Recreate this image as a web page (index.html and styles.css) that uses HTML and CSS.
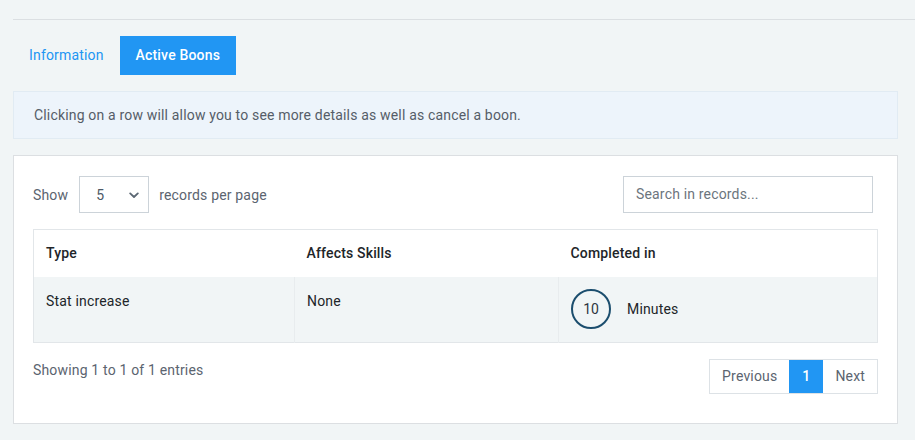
FILE: index.html
```html
<!DOCTYPE html>
<html lang="en">
<head>
<meta charset="utf-8">
<title>Active Boons</title>
<link rel="stylesheet" href="styles.css">
</head>
<body>
<div class="page">
  <div class="rule"></div>
  <nav class="tabs">
    <a class="tab">Information</a>
    <a class="tab active">Active Boons</a>
  </nav>
  <div class="alert">Clicking on a row will allow you to see more details as well as cancel a boon.</div>
  <section class="card">
    <div class="controls">
      <div class="length">
        <span>Show</span>
        <div class="select">
          <span class="select-value">5</span>
          <svg class="chev" width="10" height="7" viewBox="0 0 10 7"><path d="M1.2 1.4 L5 5 L8.8 1.4" fill="none" stroke="#5b6773" stroke-width="1.8" stroke-linecap="round" stroke-linejoin="round"/></svg>
        </div>
        <span>records per page</span>
      </div>
      <div class="search">Search in records...</div>
    </div>
    <table class="grid">
      <thead>
        <tr>
          <th class="c1">Type</th>
          <th class="c2">Affects Skills</th>
          <th class="c3">Completed in</th>
        </tr>
      </thead>
      <tbody>
        <tr>
          <td>Stat increase</td>
          <td>None</td>
          <td class="cell-timer">
            <div class="timer"><span class="ring">10</span><span>Minutes</span></div>
          </td>
        </tr>
      </tbody>
    </table>
    <div class="footer">
      <div class="info">Showing 1 to 1 of 1 entries</div>
      <div class="pager">
        <span class="pg">Previous</span>
        <span class="pg current">1</span>
        <span class="pg">Next</span>
      </div>
    </div>
  </section>
</div>
</body>
</html>
```
FILE: styles.css
```css
* { box-sizing: border-box; }
html, body { margin: 0; padding: 0; }
body {
  background: #f1f5f6;
  font-family: Roboto, "Liberation Sans", Arial, sans-serif;
  font-size: 14px;
  letter-spacing: 0.17px;
  color: #5b6470;
}
.page {
  padding: 19px 17px 0 13px;
}
.rule {
  border-top: 1px solid #dbdfe2;
  margin-right: -17px;
}
.tabs {
  display: flex;
  margin-top: 16px;
}
.tab {
  display: block;
  height: 39px;
  line-height: 39px;
  padding: 0 16px;
  font-size: 14px;
  color: #2196f3;
}
.tab.active {
  background: #2196f3;
  color: #fff;
  font-weight: 500;
}
.alert {
  margin-top: 16px;
  height: 48px;
  line-height: 46px;
  padding: 0 20px;
  background: #edf4fb;
  border: 1px solid #e1ebf3;
  color: #555d68;
}
.card {
  margin-top: 16px;
  background: #fff;
  border: 1px solid #dcdfe2;
  padding: 20px 19px 29px;
}
.controls {
  display: flex;
  justify-content: space-between;
  align-items: center;
  padding-right: 5px;
}
.length {
  display: flex;
  align-items: center;
  gap: 10px;
}
.select {
  width: 70px;
  height: 37px;
  margin-left: 1px;
  border: 1px solid #ccd3d9;
  display: flex;
  align-items: center;
  justify-content: space-between;
  padding: 0 9px 0 16px;
  color: #4c5866;
}
.chev { display: block; margin-top: 1px; }
.search {
  width: 250px;
  height: 37px;
  border: 1px solid #ccd3d9;
  line-height: 35px;
  padding: 0 12px;
  color: #6c757d;
}
.grid {
  margin-top: 16px;
  width: 100%;
  border-collapse: collapse;
  border: 1px solid #e2e6e9;
}
.grid th {
  text-align: left;
  font-weight: 500;
  color: #212529;
  height: 47px;
  padding: 0 12px;
  background: #fff;
}
.c1 { width: 261px; }
.c2 { width: 264px; }
.grid td {
  vertical-align: top;
  background: #f1f5f6;
  color: #212529;
  padding: 13px 12px 11px;
  height: 66px;
  line-height: 22px;
  border-left: 1px solid #e8ecee;
}
.grid td:first-child { border-left: none; }
.grid td.cell-timer { padding-top: 12px; padding-bottom: 12px; }
.timer {
  display: flex;
  align-items: center;
  gap: 16px;
}
.ring {
  width: 40px;
  height: 40px;
  border: 2px solid #1c4e6e;
  border-radius: 50%;
  display: flex;
  align-items: center;
  justify-content: center;
  color: #2c3440;
  font-size: 14px;
  letter-spacing: 0;
}
.footer {
  display: flex;
  justify-content: space-between;
  align-items: flex-start;
  margin-top: 16px;
}
.info {
  margin-top: 3px;
  color: #5b6470;
}
.pager {
  display: flex;
  border: 1px solid #dde2e6;
  height: 35px;
}
.pg {
  line-height: 33px;
  padding: 0 12px;
  color: #5b6470;
}
.pg.current {
  background: #2196f3;
  color: #fff;
  padding: 0;
  width: 34px;
  text-align: center;
  font-weight: 500;
}
```
